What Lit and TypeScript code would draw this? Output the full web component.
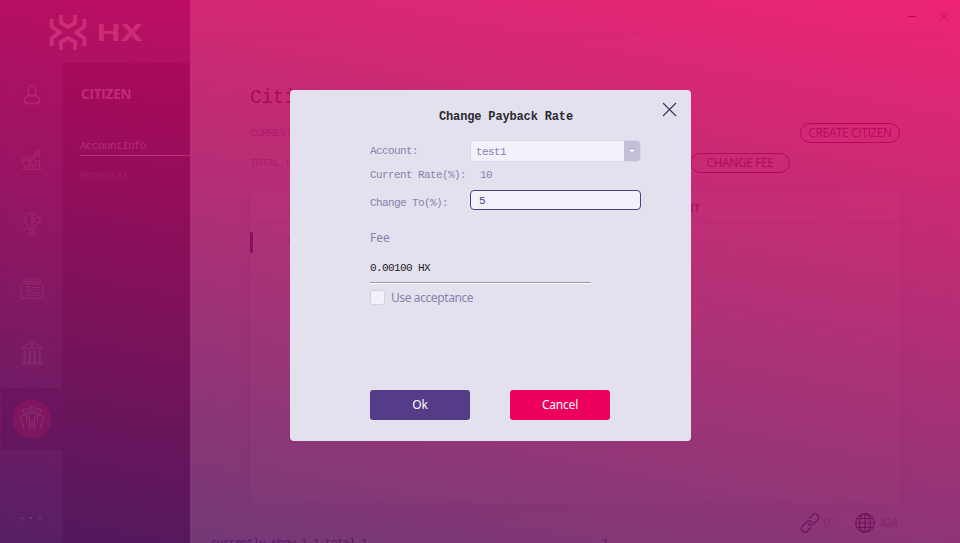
import { LitElement, html, svg, css } from "lit";
import { customElement } from "lit/decorators.js";
import { classMap } from "lit/directives/class-map.js";

const navIcons = [
  { name: "account", top: true, art: svg`<path d="M20 10.500c-2.600 0-4 2.200-4 5 0 3.200 1.500 5.500 4 5.500s4-2.300 4-5.500c0-2.800-1.400-5-4-5zM17 20.500c-3 1-5 2-5 4.500 0 2.800 3.500 4 8 4s8-1.200 8-4c0-2.500-2-3.500-5-4.500"/>` },
  { name: "market", art: svg`<path d="M9.500 29.500h21M12.500 29v-3h3v3M17.500 29v-5h3v5M23.500 29v-8.500h4V29M9.500 20.500l5-5 3.500 3.500 7-7M10.500 22.500l4-4 3.500 3.500 8-8M22 11h5.500v5.500"/>` },
  { name: "ideas", art: svg`<path d="M20 9c-4 0-7 3-7 7 0 4 3.800 5 3.800 9h6c0-3 1.800-4 2.700-6.500l2.500-.5v-4l-2.500-.8-.5-2.700-2.500-.5-2.500-1zM20 9v15M20 14a2.500 2.500 0 0 1 0 5M17 26.500h6M17 29h6M18.500 31h3M11 9l1.500 1.500M8.500 15h2.500M8.500 21l2.500-1M12 26l1.500-2"/>` },
  { name: "cards", art: svg`<path d="M9 14.500h22v15H9zM10.500 12.500h19M12 10h16v2M21 18.500h7M21 21h7M21 23.500h7M14 26h14M14 23.500c0-2 1-2.500 2.500-2.500s2.500.5 2.500 2.500M16.500 17.500a1.700 1.700 0 1 0 .1 0"/>` },
  { name: "bank", art: svg`<path d="M9.500 14.500L20 7.500l10.500 7zM13 16v12M18 16v12M23 16v12M28 16v12" stroke-width="1.200"/><path d="M12.500 16v12M17.500 16v12M22.500 16v12M27.500 16v12" stroke-width="2"/><path d="M10 28.500h20.500M9 30h22.500M20 10.500a1.500 1.500 0 1 0 .1 0"/>` },
  { name: "citizen", active: true, art: svg`<path d="M20 7.500a2.200 2.700 0 1 0 .1 0M13.500 9.500a2.200 2.500 0 1 0 .1 0M26.500 9.500a2.200 2.500 0 1 0 .1 0M17.500 30.500V18M22.500 30.500V18M20 22v8.500M15 22v-5.500c0-1.500 1.500-2.500 5-2.500s5 1 5 2.500V22M14 16h-2.500c-1.500 0-2.500 1-2.500 2.500V23l2 1v6.500M26 16h2.500c1.500 0 2.500 1 2.500 2.500V23l-2 1v6.500"/>` },
];

@customElement("hx-sidebar")
export class HxSidebar extends LitElement {
  static styles = css`
    :host { display: grid; grid-template: 63px 1fr / 62px 128px; width: 190px; height: 543px; background: #5f3f80; color: #fff; }
    .brand { grid-column: 1 / 3; }
    .brand svg { display: block; }
    .rail { display: flex; flex-direction: column; padding-top: 1px; }
    .slot { box-sizing: border-box; height: 61.600px; margin-bottom: 3.200px; padding: 0 0 0 11.500px; display: flex; align-items: center; }
    .slot.active { background: #381855; box-shadow: inset 1px 0 #b0105d; }
    .slot svg { width: 40px; height: 40px; }
    .ring { fill: none; stroke: #7b629c; }
    .glyph { fill: none; stroke: #b5a6c8; stroke-width: 1.100; }
    .glyph.top { stroke: #e5ddec; stroke-width: 1.200; }
    .active .ring { fill: #dc105e; stroke: none; }
    .active .glyph { stroke: #dcd3e6; }
    .more { margin-top: 64px; padding-left: 21px; display: flex; gap: 7px; }
    .dot { width: 2px; height: 2px; background: #d5cbe0; }
    .menu { background: #351548; padding: 23px 0 0 18px; }
    .title { font: 700 13.500px/17px "Open Sans", sans-serif; letter-spacing: -0.200px; padding-left: 1px; color: #f4eef8; }
    .item { font: 11px/16px "Liberation Mono", monospace; letter-spacing: -0.600px; color: #e5dced; }
    .item.on { margin-top: 35px; height: 17px; border-bottom: 1px solid #fff; }
    .item.off { margin-top: 12px; color: #8a70a4; }
  `;
  render() {
    return html`
      <div class="brand">
        <svg width="190" height="63">
          <g fill="none" stroke="#fff" stroke-width="3.800">
            <path d="M61 15v8l7 4 7-4v-8M61 50v-8l7-4 7 4v8M51.600 19v7.500l8 6-8 6V46M84.400 19v7.500l-8 6 8 6V46"/>
          </g>
          <text x="97" y="41" fill="#fff" font-family="Inter" font-weight="700" font-size="23" textLength="46" lengthAdjust="spacingAndGlyphs">HX</text>
        </svg>
      </div>
      <div class="rail">
        ${navIcons.map((i) => html`
          <div class=${classMap({ slot: true, active: !!i.active })}>
            <svg viewBox="0 0 40 40"><circle class="ring" cx="20" cy="20" r="19.500"/><g class=${classMap({ glyph: true, top: !!i.top })}>${i.art}</g></svg>
          </div>`)}
        <div class="more"><span class="dot"></span><span class="dot"></span><span class="dot"></span></div>
      </div>
      <div class="menu">
        <div class="title">CITIZEN</div>
        <div class="item on">AccountInfo</div>
        <div class="item off">Proposal</div>
      </div>`;
  }
}

@customElement("hx-citizen-page")
export class HxCitizenPage extends LitElement {
  static styles = css`
    :host { display: flex; flex-direction: column; width: 770px; height: 543px; overflow: hidden; background: #f4f1fa; color: #3f1069; }
    .bar { box-sizing: border-box; height: 33px; border-bottom: 1px solid #dcd3e6; display: flex; justify-content: flex-end; }
    .bar svg { display: block; }
    .mono { font-family: "Liberation Mono", monospace; font-size: 11px; letter-spacing: -0.600px; }
    .body { padding: 53px 60px 0; }
    .heading { font: 20px/24px "Liberation Mono", monospace; letter-spacing: -0.700px; color: #3b1068; }
    .line { display: flex; align-items: center; justify-content: space-between; height: 20px; color: #a07fb4; }
    .first { margin-top: 13px; }
    .second { margin-top: 10px; padding-right: 110px; }
    .pill { box-sizing: border-box; width: 100px; height: 20px; border: 1px solid #550b70; border-radius: 10px; text-align: center; font: 12px/18px "Open Sans", sans-serif; letter-spacing: -0.400px; color: #550b70; white-space: nowrap; }
    .table { box-sizing: border-box; height: 310px; margin-top: 20px; border-radius: 4px; background: #fff; box-shadow: 0 0 14px #c0b4d066; }
    .head { box-sizing: border-box; display: flex; justify-content: space-between; height: 30px; border-bottom: 1px solid #ded5e5; padding: 0 200px 0 39px; font: 700 11px/29px "Open Sans", sans-serif; color: #7c4b93; }
    .row { display: flex; align-items: center; height: 38px; color: #b19ac0; }
    .mark { width: 3px; height: 21px; background: #3c0068; border-radius: 0 2px 2px 0; margin-right: 34px; }
    .status { display: flex; justify-content: flex-end; align-items: center; height: 40px; padding-right: 63px; color: #a183b6; }
    .num { font: 12px/16px "Open Sans", sans-serif; letter-spacing: -1px; }
    .status svg { margin-right: 4px; }
    .status .link { margin-right: 26px; }
    .foot { height: 0; padding-left: 21px; margin-top: -6px; color: #230052; display: flex; }
    .foot .page { margin-left: 235px; }
    .foot span { flex: none; }
  `;
  render() {
    return html`
      <div class="bar">
        <svg width="70" height="32" fill="none">
          <path d="M18 16.500h8" stroke="#12002e" stroke-width="1.200"/>
          <path d="M50 12.500l8 8m0-8l-8 8" stroke="#6a2d70"/>
        </svg>
      </div>
      <div class="body">
        <div class="heading">Citizen</div>
        <div class="line first mono"><span>CURRENT CITIZEN</span><span class="pill">CREATE CITIZEN</span></div>
        <div class="line second mono"><span>TOTAL PAYBACK</span><span class="pill">CHANGE FEE</span></div>
        <div class="table">
          <div class="head"><span>ACCOUNT</span><span>AMOUNT</span></div>
          <div class="row mono"><span class="mark"></span><span>Citizen</span></div>
        </div>
      </div>
      <div class="status">
        <svg width="20" height="20" viewBox="0 0 20 20" fill="none" stroke="#35005f" stroke-width="1.200">
          <path d="M9 5.500l4-4c3-2.500 7.500 1.500 5 4.800l-5 5c-2 1.700-4.300 1-5-1M11 14.500l-4 4c-3 2.500-7.500-1.500-5-4.800l5-5c2-1.700 4.300-1 5 1"/>
        </svg><span class="num link">0</span>
        <svg width="20" height="20" viewBox="0 0 20 20" fill="none" stroke="#35005f" stroke-width="1.200">
          <circle cx="10" cy="10" r="9.300"/><ellipse cx="10" cy="10" rx="5.500" ry="9.300"/><path d="M10 .5v19M.5 10h19M2 5.500h16M2 14.500h16"/>
        </svg><span class="num">424</span>
      </div>
      <div class="foot mono"><span>currently show 1-1,total 1</span><span class="page">1</span></div>`;
  }
}

@customElement("payback-dialog")
export class PaybackDialog extends LitElement {
  static styles = css`
    :host { box-sizing: border-box; width: 401px; height: 351px; padding: 12px 14px 0 80px; border-radius: 4px; background: #e4e1ee; color: #8b80ad; display: flex; flex-direction: column; }
    .top { display: flex; justify-content: space-between; align-items: flex-start; height: 38px; padding-left: 69px; }
    .title { font: 700 12px/16px "Liberation Mono", monospace; letter-spacing: -0.150px; color: #2b2a2e; padding-top: 7px; }
    .close { display: block; stroke: #3b3364; stroke-width: 1.200; }
    .mono { font-family: "Liberation Mono", monospace; font-size: 11px; letter-spacing: -0.600px; }
    .form { display: grid; grid-template-columns: 100px 171px; grid-template-rows: 22px 28px 20px; align-items: center; }
    .select { box-sizing: border-box; display: flex; height: 22px; width: 171px; border: 1px solid #dcd7e8; border-radius: 4px; overflow: hidden; background: #f3f1fa; line-height: 22px; padding-left: 5px; justify-content: space-between; }
    .arrow { width: 16px; background: #c4bed7; display: flex; align-items: center; justify-content: center; }
    .arrow::before { content: ""; border: 3px solid transparent; border-top: 2px solid #fff; border-bottom: 0; }
    .value { padding: 0 0 2px 10px; }
    .cur { padding-bottom: 2px; }
    .chg { padding-top: 5px; }
    .input { box-sizing: border-box; width: 171px; height: 20px; border: 1px solid #543c88; border-radius: 4px; background: #f3f1fa; color: #543c88; padding-left: 8px; line-height: 20px; }
    .sans { font: 12px/16px "Noto Sans", sans-serif; letter-spacing: -0.400px; }
    .fee { margin-top: 20px; letter-spacing: 0; }
    .amount { box-sizing: border-box; width: 221px; height: 36px; padding-top: 15px; line-height: 12px; color: #222; border-bottom: 1px solid #999; box-shadow: 0 1px #fff; margin-top: 1px; }
    .accept { display: flex; align-items: center; gap: 6px; height: 15px; margin-top: 7px; }
    .check { box-sizing: border-box; width: 15px; height: 15px; border: 1px solid #d6d0e3; border-radius: 3px; background: #f3f1fa; }
    .actions { display: flex; gap: 40px; margin-top: 85px; letter-spacing: -0.200px; }
    .btn { width: 100px; height: 30px; border-radius: 3px; background: #543c88; color: #fff; text-align: center; line-height: 30px; }
    .cancel { background: #ec005c; }
  `;
  render() {
    return html`
      <div class="top">
        <span class="title">Change Payback Rate</span>
        <svg class="close" width="15" height="15"><path d="M1 1l13 13M14 1L1 14"/></svg>
      </div>
      <div class="form mono">
        <span>Account:</span><span class="select"><span>test1</span><span class="arrow"></span></span>
        <span class="cur">Current Rate(%):</span><span class="value">10</span>
        <span class="chg">Change To(%):</span><span class="input">5</span>
      </div>
      <div class="fee sans">Fee</div>
      <div class="amount mono">0.00100 HX</div>
      <div class="accept sans"><span class="check"></span><span>Use acceptance</span></div>
      <div class="actions sans"><span class="btn">Ok</span><span class="btn cancel">Cancel</span></div>`;
  }
}

@customElement("app-root")
export class AppRoot extends LitElement {
  static styles = css`
    :host { display: flex; position: relative; width: 960px; height: 543px; overflow: hidden; }
    .veil { position: absolute; inset: 0; background: linear-gradient(191deg, #ec005c, #551a60); opacity: 0.85; }
    .dialog { position: absolute; left: 290px; top: 90px; }
  `;
  render() {
    return html`
      <hx-sidebar></hx-sidebar>
      <hx-citizen-page></hx-citizen-page>
      <div class="veil"></div>
      <payback-dialog class="dialog"></payback-dialog>`;
  }
}
